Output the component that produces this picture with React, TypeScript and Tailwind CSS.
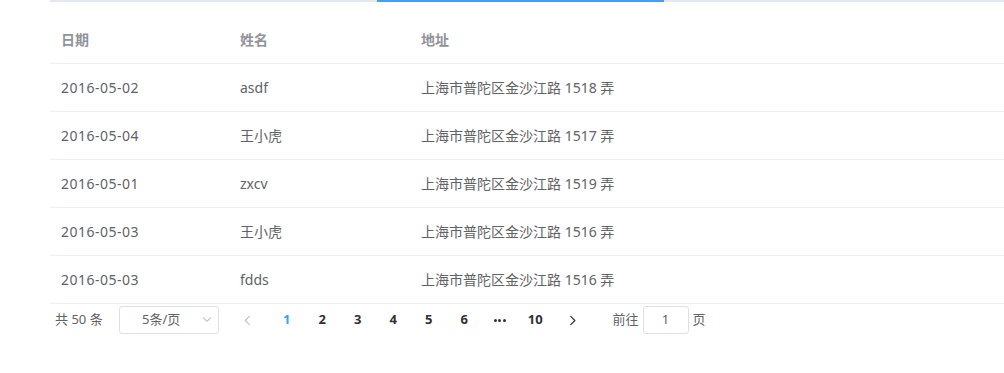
const rows = [
  { date: "2016-05-02", name: "asdf", address: "上海市普陀区金沙江路 1518 弄" },
  { date: "2016-05-04", name: "王小虎", address: "上海市普陀区金沙江路 1517 弄" },
  { date: "2016-05-01", name: "zxcv", address: "上海市普陀区金沙江路 1519 弄" },
  { date: "2016-05-03", name: "王小虎", address: "上海市普陀区金沙江路 1516 弄" },
  { date: "2016-05-03", name: "fdds", address: "上海市普陀区金沙江路 1516 弄" },
];

const pages = ["1", "2", "3", "4", "5", "6", "more", "10"];

function Chevron({ dir, className }: { dir: "left" | "right" | "down"; className?: string }) {
  const d = dir === "left" ? "M7 1.5 L2.5 6 L7 10.5" : dir === "right" ? "M3 1.5 L7.5 6 L3 10.5" : "M1.5 3.5 L6 7.5 L10.5 3.5";
  return (
    <svg width="12" height="12" viewBox="0 0 12 12" className={className}>
      <path d={d} fill="none" stroke="currentColor" strokeWidth="1.3" strokeLinecap="round" strokeLinejoin="round" />
    </svg>
  );
}

export default function App() {
  return (
    <div className="min-h-[373px] bg-white pl-[50px] font-['Noto_Sans','Noto_Sans_CJK_SC',sans-serif] text-[14px] text-[#606266]">
      {/* Tab bar */}
      <div className="flex h-[2px] bg-[#e4e7ed]">
        <div className="w-[327px]" />
        <div className="w-[287px] bg-[#409eff]" />
      </div>

      {/* Table */}
      <div className="mt-[14px] w-[1000px]">
        <div className="grid grid-cols-[180px_180px_1fr] border-b border-[#ebeef5] py-[12px] font-bold text-[#909399] leading-[23px]">
          <div className="pl-[11px]">日期</div>
          <div className="pl-[10px]">姓名</div>
          <div className="pl-[11px]">地址</div>
        </div>
        {rows.map((row, idx) => (
          <div
            key={idx}
            className="grid grid-cols-[180px_180px_1fr] border-b border-[#ebeef5] py-[12px] leading-[23px]"
          >
            <div className="pl-[11px] tracking-[0.5px]">{row.date}</div>
            <div className="pl-[10px]">{row.name}</div>
            <div className="pl-[11px]">{row.address}</div>
          </div>
        ))}
      </div>

      {/* Pagination */}
      <div className="flex h-[32px] items-center px-[5px] text-[13px]">
        <span className="w-[64px]">共 50 条</span>
        <div className="flex h-[28px] w-[100px] items-center rounded-[3px] border border-[#dcdfe6] pl-[22px] pr-[6px]">
          <span className="flex-1">5条/页</span>
          <Chevron dir="down" className="h-[10px] w-[10px] text-[#c0c4cc]" />
        </div>
        <button className="ml-[14.5px] flex h-[28px] w-[35.5px] items-center justify-center pl-[6px] pr-[12px] text-[#c0c4cc]">
          <Chevron dir="left" className="h-[11px] w-[11px]" />
        </button>
        {pages.map((p) => (
          <div
            key={p}
            className={
              "flex h-[28px] w-[35.5px] items-center justify-center font-bold " +
              (p === "1" ? "text-[#409eff]" : "text-[#303133]")
            }
          >
            {p === "more" ? (
              <span className="flex gap-[1.5px]">
                <span className="h-[3px] w-[3px] rounded-full bg-[#303133]" />
                <span className="h-[3px] w-[3px] rounded-full bg-[#303133]" />
                <span className="h-[3px] w-[3px] rounded-full bg-[#303133]" />
              </span>
            ) : (
              p
            )}
          </div>
        ))}
        <button className="flex h-[28px] w-[35.5px] items-center justify-center pl-[12px] pr-[6px] text-[#303133]">
          <Chevron dir="right" className="h-[11px] w-[11px]" />
        </button>
        <span className="ml-[24px]">前往</span>
        <div className="mx-[4px] flex h-[28px] w-[46px] items-center justify-center rounded-[3px] border border-[#dcdfe6]">
          1
        </div>
        <span>页</span>
      </div>
    </div>
  );
}
